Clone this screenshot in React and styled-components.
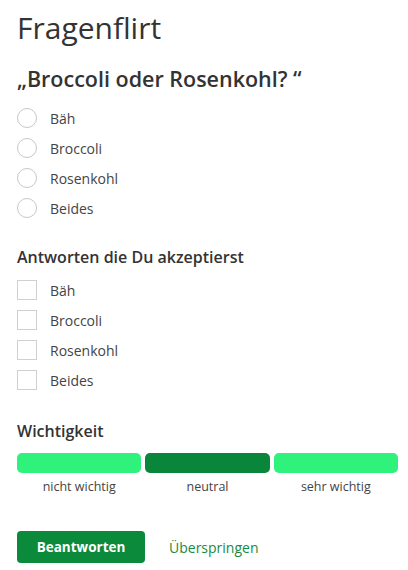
import React from "react";
import styled, { createGlobalStyle } from "styled-components";

const Global = createGlobalStyle`
  html, body { margin: 0; padding: 0; background: #fff; }
  body { font-family: "Open Sans", "Noto Sans", sans-serif; color: #333; }
  * { box-sizing: border-box; }
`;

const Page = styled.div`
  width: 408px;
  padding: 9px 10px 0 17px;
  display: flex;
  flex-direction: column;
`;

const Title = styled.h1`
  margin: 0;
  font-size: 30px;
  font-weight: 400;
  line-height: 38px;
  color: #333;
`;

const Question = styled.h2`
  margin: 18px 0 0;
  font-size: 21.5px;
  font-weight: 600;
  line-height: 28px;
  color: #333;
`;

const SectionTitle = styled.h3`
  margin: ${(p) => p.$top}px 0 0;
  font-size: 16px;
  font-weight: 600;
  line-height: 22px;
  color: #333;
`;

const OptionList = styled.div`
  display: flex;
  flex-direction: column;
  margin-top: ${(p) => p.$top}px;
`;

const Option = styled.label`
  display: flex;
  align-items: center;
  height: 30px;
  gap: 13px;
  font-size: 14px;
  color: #444;
  cursor: pointer;
`;

const Radio = styled.span`
  width: 20px;
  height: 20px;
  border-radius: 50%;
  border: 1px solid #c8c8c8;
  background: #fff;
  flex: none;
`;

const Check = styled.span`
  width: 20px;
  height: 20px;
  border: 1px solid #d0d0d0;
  background: #fff;
  flex: none;
`;

const Scale = styled.div`
  margin-top: 11px;
  display: grid;
  grid-template-columns: repeat(3, 1fr);
  column-gap: 4px;
  row-gap: 5px;
`;

const Segment = styled.div`
  height: 20px;
  border-radius: 5px;
  background: ${(p) => (p.$active ? "#0a863b" : "#2ef27b")};
`;

const ScaleLabel = styled.div`
  text-align: center;
  font-size: 12.5px;
  line-height: 18px;
  color: #444;
`;

const Actions = styled.div`
  margin-top: 35px;
  display: flex;
  align-items: center;
  gap: 24px;
`;

const Primary = styled.button`
  height: 32px;
  width: 128px;
  border: none;
  border-radius: 4px;
  background: #0b8a3c;
  color: #fff;
  font-family: inherit;
  font-size: 13.5px;
  font-weight: 700;
  padding: 0;
`;

const LinkButton = styled.a`
  font-size: 14px;
  color: #178a44;
  text-decoration: none;
`;

const options = ["Bäh", "Broccoli", "Rosenkohl", "Beides"];
const scale = [
  { label: "nicht wichtig", active: false },
  { label: "neutral", active: true },
  { label: "sehr wichtig", active: false },
];

export default function App() {
  return (
    <>
      <Global />
      <Page>
        <Title>Fragenflirt</Title>
        <Question>„Broccoli oder Rosenkohl? “</Question>
        <OptionList $top={10}>
          {options.map((o) => (
            <Option key={o}>
              <Radio />
              {o}
            </Option>
          ))}
        </OptionList>
        <SectionTitle $top={23}>Antworten die Du akzeptierst</SectionTitle>
        <OptionList $top={7}>
          {options.map((o) => (
            <Option key={o}>
              <Check />
              {o}
            </Option>
          ))}
        </OptionList>
        <SectionTitle $top={25}>Wichtigkeit</SectionTitle>
        <Scale>
          {scale.map((s) => (
            <Segment key={s.label} $active={s.active} />
          ))}
          {scale.map((s) => (
            <ScaleLabel key={s.label}>{s.label}</ScaleLabel>
          ))}
        </Scale>
        <Actions>
          <Primary>Beantworten</Primary>
          <LinkButton href="#">Überspringen</LinkButton>
        </Actions>
      </Page>
    </>
  );
}
